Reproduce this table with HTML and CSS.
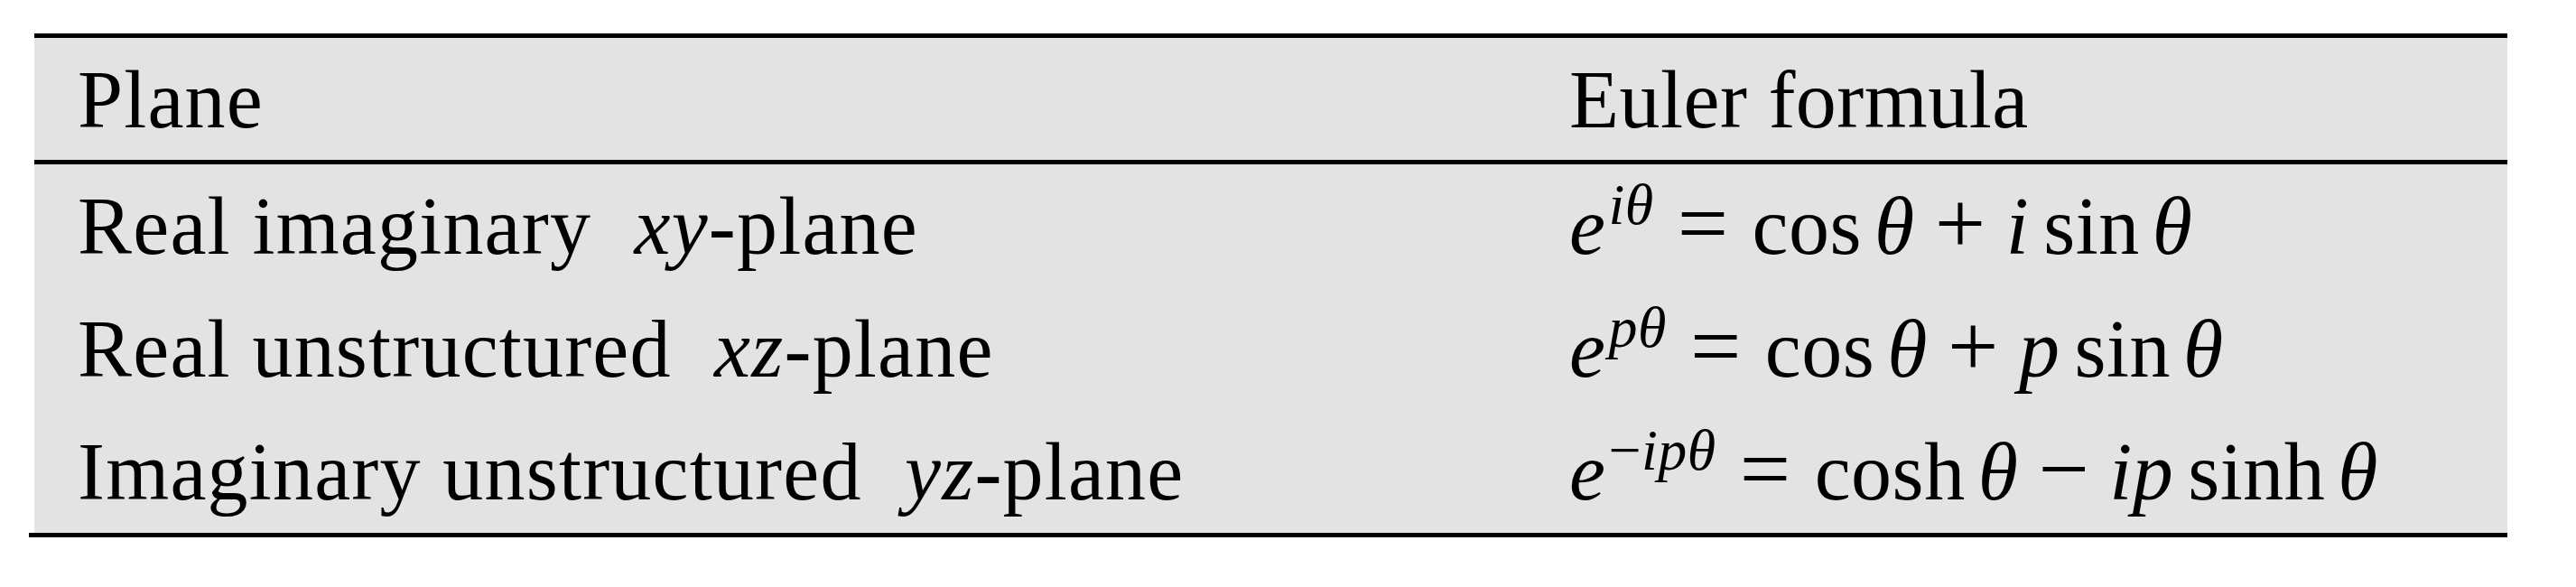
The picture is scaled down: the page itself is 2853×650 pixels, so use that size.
FILE: index.html
```html
<!DOCTYPE html>
<html lang="en">
<head>
<meta charset="utf-8">
<title>Euler formula table</title>
<link rel="stylesheet" href="styles.css">
</head>
<body>
<div class="page">
  <div class="table">
    <div class="row head">
      <div class="c1">Plane</div>
      <div class="c2">Euler formula</div>
    </div>
    <div class="body">
      <div class="row">
        <div class="c1">Real imaginary&nbsp; <i>xy</i>-plane</div>
        <div class="c2 math"><i>e</i><sup><i>iθ</i></sup><span class="rel">=</span>cos<span class="th"><i>θ</i></span><span class="bin">+</span><i>i</i><span class="fn">sin</span><span class="th"><i>θ</i></span></div>
      </div>
      <div class="row">
        <div class="c1">Real unstructured&nbsp; <i>xz</i>-plane</div>
        <div class="c2 math"><i>e</i><sup><i>pθ</i></sup><span class="rel">=</span>cos<span class="th"><i>θ</i></span><span class="bin">+</span><i>p</i><span class="fn">sin</span><span class="th"><i>θ</i></span></div>
      </div>
      <div class="row">
        <div class="c1">Imaginary unstructured&nbsp; <i>yz</i>-plane</div>
        <div class="c2 math"><i>e</i><sup>−<i>ipθ</i></sup><span class="rel">=</span>cosh<span class="th"><i>θ</i></span><span class="bin">−</span><i>ip</i><span class="fn">sinh</span><span class="th"><i>θ</i></span></div>
      </div>
    </div>
  </div>
  <div class="bottom-rule"></div>
</div>
</body>
</html>
```
FILE: styles.css
```css
html, body {
  margin: 0;
  padding: 0;
  background: #ffffff;
}

.page {
  padding-top: 37px;
  padding-left: 38px;
  width: 2739px;
}

.table {
  background: #e3e3e3;
  border-top: 5px solid #000000;
  font-family: "Liberation Serif", "Times New Roman", serif;
  font-size: 90px;
  color: #000000;
}

.row {
  display: flex;
  height: 135px;
  line-height: 135px;
  padding-left: 48px;
  white-space: nowrap;
}

.head {
  border-bottom: 5px solid #000000;
}

.body {
  height: 408px;
  display: flex;
  flex-direction: column;
  justify-content: space-between;
}

.body .row {
  height: 136px;
}

.c1 {
  width: 1652px;
  flex: none;
  letter-spacing: 1.2px;
}

.c2 {
  flex: 1;
  letter-spacing: 0.5px;
}

.row > div {
  padding-top: 1px;
}

.math i {
  font-style: italic;
}

.math sup {
  font-size: 64px;
  line-height: 0;
  vertical-align: 33px;
  margin-left: 3px;
}

.rel,
.bin {
  font-size: 100px;
  display: inline-block;
  line-height: 0;
}

.rel {
  margin: 0 26px 0 26px;
}

.bin {
  margin: 0 22px;
}

.fn {
  margin-left: 16px;
}

.th {
  margin-left: 14px;
}

.bottom-rule {
  height: 5px;
  background: #000000;
  margin-left: -6px;
}
```
